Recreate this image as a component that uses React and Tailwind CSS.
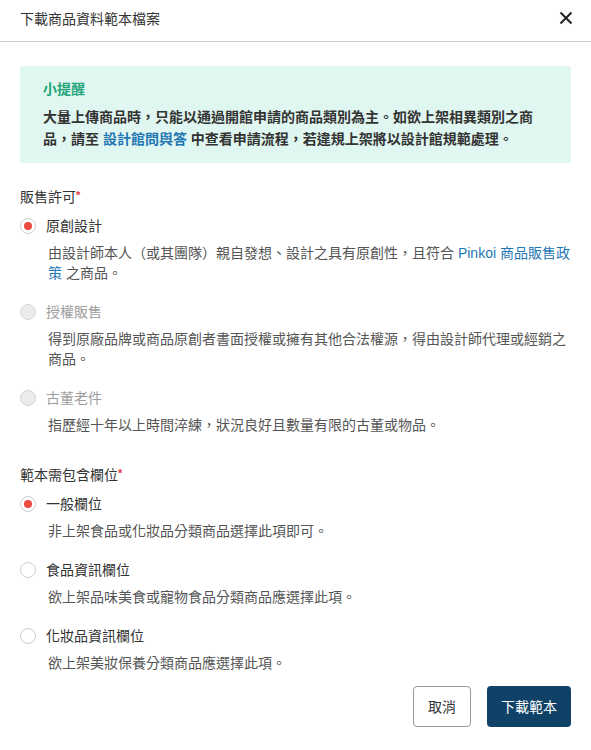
import { useState } from "react";

const font = { fontFamily: '"Liberation Sans", "Noto Sans CJK TC", sans-serif' };

const Radio = ({ checked, disabled }) => {
    if (disabled)
        return <span className="block w-4 h-4 rounded-full border border-[#d6d6d6] bg-[#ebebeb] shrink-0"></span>;
    return <span className="flex items-center justify-center w-4 h-4 rounded-full border border-[#cfcfcf] bg-white shrink-0">
        {checked && <span className="block w-2 h-2 rounded-full bg-[#eb4a3f]"></span>}
    </span>;
};

function Option({ label, desc, checked, disabled, onPick, first }) {
    return <div className={first ? "mt-[9px]" : "mt-[19px]"}>
        <div className="flex items-center gap-[10px] h-5 cursor-pointer" onClick={() => !disabled && onPick()}>
            <Radio checked={checked} disabled={disabled} />
            <span className={disabled ? "text-[#9d9d9d]" : "text-[#333]"}>{label}</span>
        </div>
        <div className="mt-[7px] ml-7 text-[#555] leading-5">{desc}</div>
    </div>;
}

const Title = ({ children, className }) =>
    <div className={"text-[#333] leading-5 " + (className || "")}>
        {children}<span className="text-[#e53935] text-[11px] font-bold align-top relative -top-[2px]">*</span>
    </div>;

export default function App() {
    const [license, setLicense] = useState("original");
    const [fields, setFields] = useState("general");

    return <div style={font} className="w-[591px] h-[750px] bg-white text-sm overflow-hidden">
        <div className="h-[42px] flex items-center justify-between px-5 border-b border-[#cccccc]">
            <div className="text-[#333] -mt-[4px]">下載商品資料範本檔案</div>
            <svg width="14" height="14" viewBox="0 0 14 14" className="-mt-[6px] -mr-[2px]">
                <path d="M1.5 1.5 L12.5 12.5 M12.5 1.5 L1.5 12.5" stroke="#222" strokeWidth="2" strokeLinecap="butt" />
            </svg>
        </div>

        <div className="px-5">
            <div className="mt-6 bg-[#e0f6f0] rounded-[3px] pt-3 pb-[13px] px-[23px]">
                <div className="font-bold text-[#1fa47a] leading-[22px]">小提醒</div>
                <div className="mt-1.5 font-bold text-[#333] leading-[22px]">
                    大量上傳商品時，只能以通過開館申請的商品類別為主。如欲上架相異類別之商品，請至 <span className="text-[#1f77b4]">設計館問與答</span> 中查看申請流程，若違規上架將以設計館規範處理。
                </div>
            </div>

            <Title className="mt-6">販售許可</Title>
            <Option first label="原創設計" checked={license == "original"} onPick={() => setLicense("original")}
                desc={<>由設計師本人（或其團隊）親自發想、設計之具有原創性，且符合 <span className="text-[#1f77b4]">Pinkoi 商品販售政策</span> 之商品。</>} />
            <Option label="授權販售" disabled desc="得到原廠品牌或商品原創者書面授權或擁有其他合法權源，得由設計師代理或經銷之商品。" />
            <Option label="古董老件" disabled desc="指歷經十年以上時間淬練，狀況良好且數量有限的古董或物品。" />

            <Title className="mt-[30px]">範本需包含欄位</Title>
            <Option first label="一般欄位" checked={fields == "general"} onPick={() => setFields("general")}
                desc="非上架食品或化妝品分類商品選擇此項即可。" />
            <Option label="食品資訊欄位" checked={fields == "food"} onPick={() => setFields("food")}
                desc="欲上架品味美食或寵物食品分類商品應選擇此項。" />
            <Option label="化妝品資訊欄位" checked={fields == "cosmetic"} onPick={() => setFields("cosmetic")}
                desc="欲上架美妝保養分類商品應選擇此項。" />

            <div className="mt-[13px] flex justify-end gap-4">
                <button className="h-[41px] px-[14px] border border-[#9a9a9a] rounded text-[#333] bg-white">取消</button>
                <button className="h-[41px] px-[14px] rounded bg-[#0f4266] text-white">下載範本</button>
            </div>
        </div>
    </div>;
}
